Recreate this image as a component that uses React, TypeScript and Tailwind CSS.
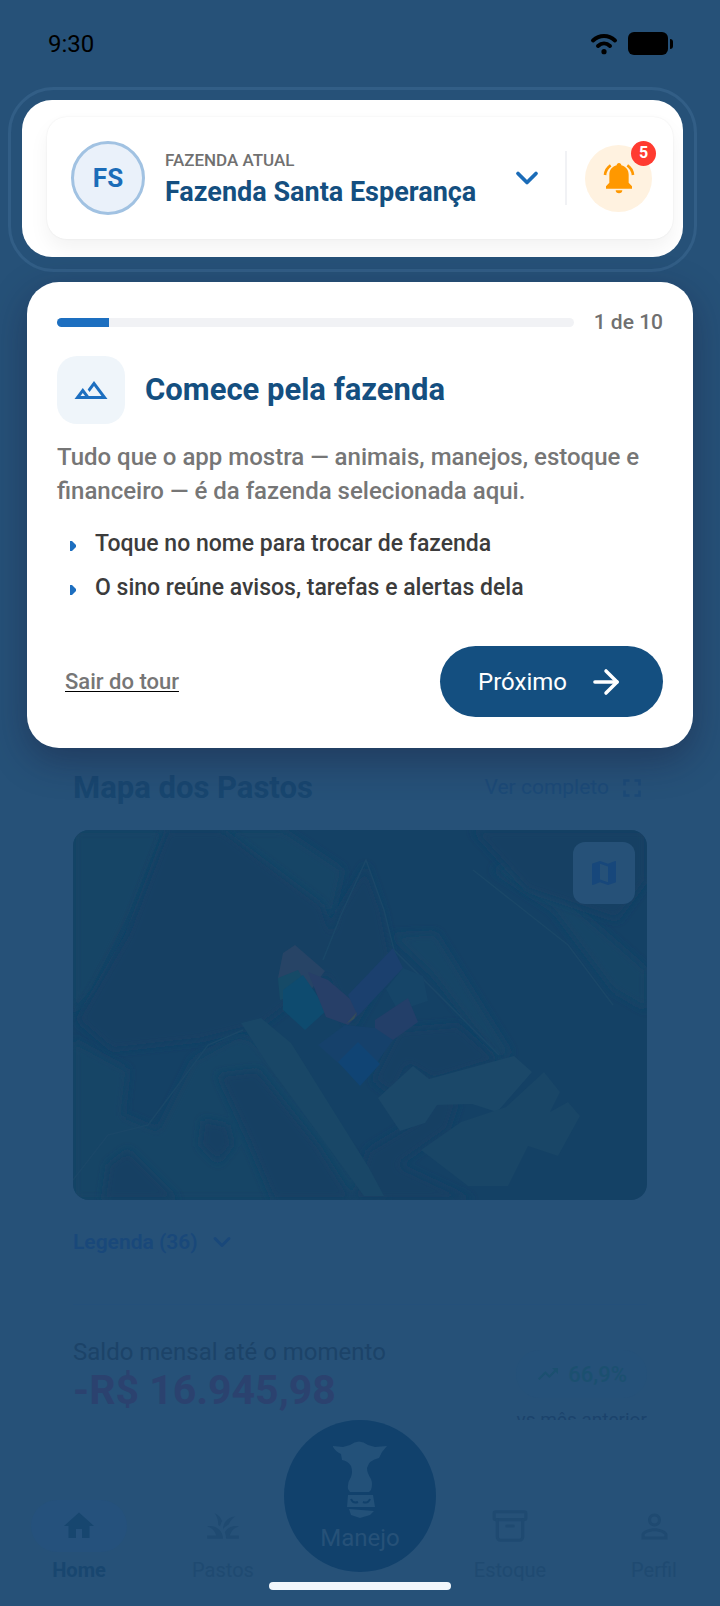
import React, { useState } from 'react';
import {
  MdFullscreen,
  MdHome,
  MdMap,
  MdOutlineGrass,
  MdOutlineLandscape,
  MdPersonOutline,
  MdTrendingUp,
} from 'react-icons/md';
import { Archive, ArrowRight, ChevronDown } from 'lucide-react';

const TOTAL_STEPS = 10;

const tips = [
  'Toque no nome para trocar de fazenda',
  'O sino reúne avisos, tarefas e alertas dela',
];

function StatusBar() {
  return (
    <div className="flex h-[87px] items-center justify-between pl-12 pr-[47px] text-black">
      <span className="text-2xl">9:30</span>
      <div className="flex items-center gap-2.5">
        <svg width="28" height="22" viewBox="0 0 28 22" fill="none" stroke="currentColor" strokeWidth="4" strokeLinecap="round">
          <path d="M3 7.5C9.500 1.500 18.500 1.500 25 7.500" />
          <path d="M8 13C11.500 9.800 16.500 9.800 20 13" />
          <circle cx="14" cy="18.700" r="2.600" fill="currentColor" stroke="none" />
        </svg>
        <div className="flex items-center gap-0.5">
          <div className="h-[23px] w-10 rounded-md bg-black" />
          <div className="h-2.5 w-[3px] rounded-r bg-black" />
        </div>
      </div>
    </div>
  );
}

function BellRinging() {
  return (
    <svg width="32" height="32" viewBox="0 0 96 96" className="fill-[#ff9800] stroke-[#ff9800]">
      <path
        d="M48 3c4 0 7 3 7 7 13 3 22 14 22 28v24l10 11v7H9v-7l10-11V38c0-14 9-25 22-28 0-4 3-7 7-7z"
        stroke="none"
      />
      <path d="M38 85h20c0 5-4 9-10 9s-10-4-10-9z" stroke="none" />
      <path d="M6 39Q8 20 23 10M90 39Q88 20 73 10" fill="none" strokeWidth="8" />
    </svg>
  );
}

function FarmHeader() {
  return (
    <div className="ml-2 mr-[23px] rounded-[46px] border-3 border-[#325e86] px-[11px] pt-2.5 pb-3">
      <div className="overflow-hidden rounded-[30px] bg-white pt-[17px] pr-2.5 pb-[18px] pl-[25px]">
        <div className="flex items-center rounded-[20px] bg-white py-6 pr-[21px] pl-6 shadow-[0_0_2px_rgba(0,0,0,0.08),0_10px_20px_rgba(0,0,0,0.05)]">
          <div className="flex size-[74px] shrink-0 items-center justify-center rounded-full border-3 border-[#a1c2e2] bg-[#eaf1fa] text-[26px] font-bold text-[#1b6cb8]">
            FS
          </div>
          <button className="ml-5 flex min-w-0 flex-1 items-center justify-between text-left" aria-label="Trocar de fazenda">
            <span className="flex flex-col pt-1">
              <span className="text-[17px] leading-6 font-medium text-[#707070]">FAZENDA ATUAL</span>
              <span className="text-[27px] leading-10 font-bold whitespace-nowrap text-[#144f80]">Fazenda Santa Esperança</span>
            </span>
            <ChevronDown size={36} strokeWidth={2.5} className="text-[#1b6cb8]" />
          </button>
          <div className="ml-5 h-[54px] w-0.5 bg-[#f1f2f5]" />
          <button className="relative ml-[18px] flex size-[67px] shrink-0 items-center justify-center rounded-full bg-[#fff2e0]" aria-label="Notificações">
            <BellRinging />
            <span className="absolute -top-1 -right-1 flex size-[25px] items-center justify-center rounded-full bg-[#ff3b30] text-base font-bold text-white">
              5
            </span>
          </button>
        </div>
      </div>
    </div>
  );
}

function TourCard({ step, onNext, onExit }: { step: number; onNext: () => void; onExit: () => void }) {
  return (
    <section className="relative mx-[27px] mt-2.5 rounded-[32px] bg-white px-[30px] pt-[26px] pb-[31px] shadow-[0_12px_36px_rgba(25,25,55,0.4)]">
      <div className="flex items-center gap-5">
        <div className="h-[9px] flex-1 overflow-hidden rounded-full bg-[#f1f2f5]">
          <div className="h-full bg-[#1d6fc0]" style={{ width: `${(step / TOTAL_STEPS) * 100}%` }} />
        </div>
        <span className="text-[21px] leading-7 font-medium text-[#707070]">
          {step} de {TOTAL_STEPS}
        </span>
      </div>

      <div className="mt-5 flex items-center gap-5">
        <div className="flex size-[68px] items-center justify-center rounded-[20px] bg-[#eff5fa]">
          <MdOutlineLandscape size={36} className="text-[#1d6fc0]" />
        </div>
        <h2 className="text-[31px] leading-10 font-bold text-[#144f80]">Comece pela fazenda</h2>
      </div>

      <p className="mt-4 text-2xl leading-[34px] font-medium text-[#767676]">
        Tudo que o app mostra — animais, manejos, estoque e financeiro — é da fazenda selecionada aqui.
      </p>

      <ul className="mt-[22px] flex flex-col gap-4 pl-3">
        {tips.map((tip) => (
          <li key={tip} className="flex items-center gap-[18px] text-[23px] leading-7 font-medium text-[#3c3c3c]">
            <svg width="8" height="10" viewBox="0 0 8 10" className="mt-1 fill-[#1d6fc0]">
              <path d="M1 0h2l4 4v2l-4 4H1z" />
            </svg>
            {tip}
          </li>
        ))}
      </ul>

      <div className="mt-11 flex items-center justify-between">
        <button onClick={onExit} className="pl-2 text-[22px] leading-8 font-medium text-[#767676] underline decoration-black decoration-1 underline-offset-2">
          Sair do tour
        </button>
        <button onClick={onNext} className="flex h-[71px] items-center gap-5 rounded-full bg-[#144f80] pr-[38px] pl-[38px] text-2xl text-white">
          Próximo
          <ArrowRight size={38} strokeWidth={2.2} />
        </button>
      </div>
    </section>
  );
}

function PastureMap() {
  return (
    <svg viewBox="0 0 574 370" preserveAspectRatio="none" className="block h-[370px] w-full">
      <defs>
        <filter id="soft">
          <feGaussianBlur stdDeviation="4" />
        </filter>
      </defs>
      <rect width="574" height="370" fill="#144165" />
      <g fill="#184566" filter="url(#soft)">
        <path d="M0 0h92L60 80 20 160 0 185z" />
        <path d="M150 0h60l60 40-10 45-35-15z" />
        <path d="M0 210l55 30-5 45 35 15 35-70 45-25 15 5 120 140 15 20H0z" />
        <path d="M318 105l45-2 75 120-12 8-66-86z" />
        <path d="M420 40l60 40 60 80 34 20v-40l-80-70-50-40z" />
      </g>
      <g fill="#123f63" filter="url(#soft)">
        <path d="M94 0h55l60 45 40 30 20 60-80 60-60 15-90 10-35-30 50-85z" />
        <path d="M265 80l28-45 16 45 10 50-40 70-30-65z" />
        <path d="M400 0h174v50l-30 40-90-30z" />
        <path d="M325 200l60-5 40 35-65 20-25-15-15 30-20-15z" />
        <path d="M145 245l40-5 60 75 35 55h-80l-25-60z" />
        <path d="M130 290l25 5 5 20-15 18-18-18zM30 370l5-35 20-15 50 50z" />
        <path d="M360 265l25 5-10 30-50 35 75 35H280l15-50 50-30z" />
      </g>
      <path d="M168 193l20-5 30 25 78 125 15 28h-20L195 235z" fill="#194767" />
      <g fill="#1b4869">
        <path d="M305 268l35-32 16 13 85-23 18 16-35 40-25-8-35 1-12 18-25 8z" />
        <path d="M348 320l40-28 45-15 38-35 16 20-10 20 18-10 12 14-22 40-30-10-20 40h-40z" fill="#194667" />
      </g>
      <g fill="none" stroke="#1a4768" strokeWidth="1.500">
        <path d="M250 130l18-45 25-55 18 50 10 40 105 105M400 40l95 75 45 60" />
        <path d="M0 350l35-45 40-10 60-80 35-15" />
      </g>
      <g strokeLinejoin="round">
        <path d="M205 148l5-25 12-8 30 26-15 20-15-5z" fill="#274466" />
        <path d="M205 148l20-8 12 20-30 10z" fill="#164a67" />
        <path d="M210 160l20-15 24 35-22 20-22-20z" fill="#0e4b6f" />
        <path d="M235 142l20 8 35 30-15 15-22-8z" fill="#273f68" />
        <path d="M275 165l45-47 10 20-45 48z" fill="#1b406e" />
        <path d="M330 138l20 8 5 25-30 10-12-22z" fill="#164568" />
        <path d="M302 190l33-22 10 24-25 18-18-5z" fill="#233f69" />
        <path d="M245 215l27-20 30 3 18 12-25 35-22-5z" fill="#16416b" />
        <path d="M265 232l20-20 22 22-20 22z" fill="#104474" />
        <path d="M274 193l10-11-3 7-10 6z" fill="#354d58" />
      </g>
    </svg>
  );
}

function CowHead() {
  return (
    <svg width="54" height="78" viewBox="54 24 54 78" className="fill-[#235179]">
      <path d="M54 30l10 1 7-2q9-7 18 0l7 2 12-1-5 6-3 6q-10 2-12 10 0 5 4 11 2 5 0 11l-2 2H71l-2-3q-1-6 3-12 2-5 0-11-3-5-9-6l-1-6q-5-2-8-7z" />
      <path d="M69 79h25l2 12H68zM70 93l25 2-4 4-10 3-9-3z" />
      <path d="M72 83q2 5 7 3M84 86q5 2 7-3" fill="none" stroke="#11416c" strokeWidth="2" />
    </svg>
  );
}

function Dashboard() {
  return (
    <main className="px-[73px] pt-[22px]">
      <div className="flex items-center justify-between">
        <h2 className="text-[31px] leading-9 font-bold text-[#18466f]">Mapa dos Pastos</h2>
        <a href="#mapa" className="flex items-center gap-2 text-[21px] text-[#1c4a77]">
          Ver completo
          <MdFullscreen size={30} />
        </a>
      </div>

      <div id="mapa" className="relative mt-6 overflow-hidden rounded-2xl">
        <PastureMap />
        <button className="absolute top-3 right-3 flex size-[62px] items-center justify-center rounded-xl bg-[#265178]" aria-label="Camadas do mapa">
          <MdMap size={32} className="text-[#17477b]" />
        </button>
      </div>

      <button className="mt-7 flex items-center gap-2.5 text-[21px] leading-7 font-semibold text-[#19487a]">
        Legenda (36)
        <ChevronDown size={28} strokeWidth={2.5} />
      </button>

      <div className="mt-12 h-8 border-t border-[#24507a]" />

      <div className="flex h-[84px] items-start justify-between overflow-hidden">
        <div>
          <p className="text-2xl leading-8 text-[#1c4368]">Saldo mensal até o momento</p>
          <p className="text-[41px] leading-[44px] font-bold text-[#2b426f]">-R$ 16.945,98</p>
        </div>
        <div className="flex shrink-0 flex-col items-center pt-[14px]">
          <div className="flex h-12 items-center gap-2 rounded-full bg-[#255179] px-5 text-[22px] font-medium text-[#1b5070]">
            <MdTrendingUp size={24} />
            66,9%
          </div>
          <p className="mt-2.5 text-[19px] leading-6 text-[#1b436c]">vs mês anterior</p>
        </div>
      </div>
    </main>
  );
}

function BottomNav() {
  return (
    <nav className="grid grid-cols-[158fr_130fr_144fr_156fr_132fr] text-xl leading-5">
      <a href="#home" className="mt-20 flex flex-col items-center gap-2 font-bold text-[#18466f]">
        <span className="flex h-[52px] w-24 items-center justify-center rounded-full bg-[#25517c]">
          <MdHome size={36} className="text-[#17466f]" />
        </span>
        Home
      </a>
      <a href="#pastos" className="mt-20 flex flex-col items-center gap-2 text-[#1f4a71]">
        <span className="flex h-[52px] items-center">
          <MdOutlineGrass size={38} />
        </span>
        Pastos
      </a>
      <button className="-mx-1 flex h-[152px] flex-col items-center rounded-full bg-[#11416c] pt-5 text-2xl text-[#265178]">
        <CowHead />
        <span className="mt-1 leading-8">Manejo</span>
      </button>
      <a href="#estoque" className="mt-20 flex flex-col items-center gap-2 text-[#1f4a71]">
        <span className="flex h-[52px] items-center">
          <Archive size={38} strokeWidth={2} />
        </span>
        Estoque
      </a>
      <a href="#perfil" className="mt-20 flex flex-col items-center gap-2 text-[#1f4a71]">
        <span className="flex h-[52px] items-center">
          <MdPersonOutline size={39} />
        </span>
        Perfil
      </a>
    </nav>
  );
}

export default function App() {
  const [step, setStep] = useState(1);
  const [tourOpen, setTourOpen] = useState(true);

  return (
    <div className="min-h-screen bg-[#265178] font-[Roboto,sans-serif]">
      <StatusBar />
      <FarmHeader />
      {tourOpen && (
        <TourCard
          step={step}
          onNext={() => setStep((s) => Math.min(s + 1, TOTAL_STEPS))}
          onExit={() => setTourOpen(false)}
        />
      )}
      <Dashboard />
      <BottomNav />
      {/* Home indicator */}
      <div className="mx-auto mt-0.5 mb-4 h-2 w-[182px] rounded-full bg-[#f2f7fc]" />
    </div>
  );
}
